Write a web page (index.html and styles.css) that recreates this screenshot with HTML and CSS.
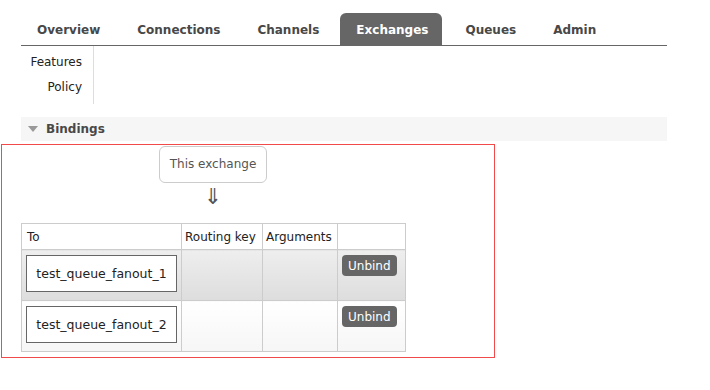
FILE: index.html
```html
<!DOCTYPE html>
<html lang="en">
<head>
    <meta charset="UTF-8">
    <title>Exchange: bindings</title>
    <link rel="stylesheet" href="styles.css">
</head>
<body>
    <div class="page">
        <ul class="tabs">
            <li><a href="#">Overview</a></li>
            <li><a href="#">Connections</a></li>
            <li><a href="#">Channels</a></li>
            <li class="selected"><a href="#">Exchanges</a></li>
            <li><a href="#">Queues</a></li>
            <li><a href="#">Admin</a></li>
        </ul>
        <div class="sub">
            <ul class="subnav">
                <li><a href="#">Features</a></li>
                <li><a href="#">Policy</a></li>
            </ul>
        </div>
        <h2 class="section-head"><span class="arrow"></span>Bindings</h2>
    </div>
    <div class="bindings">
        <div class="flow">
            <div class="this-exchange">This exchange</div>
            <div class="down">&#8659;</div>
        </div>
        <table class="list">
            <colgroup>
                <col class="c-to">
                <col class="c-key">
                <col class="c-args">
                <col class="c-btn">
            </colgroup>
            <thead>
                <tr>
                    <th class="col-to">To</th>
                    <th>Routing key</th>
                    <th>Arguments</th>
                    <th></th>
                </tr>
            </thead>
            <tbody>
                <tr class="alt1">
                    <td><span class="queue">test_queue_fanout_1</span></td>
                    <td></td>
                    <td></td>
                    <td><button class="btn">Unbind</button></td>
                </tr>
                <tr class="alt2">
                    <td><span class="queue">test_queue_fanout_2</span></td>
                    <td></td>
                    <td></td>
                    <td><button class="btn">Unbind</button></td>
                </tr>
            </tbody>
        </table>
    </div>
</body>
</html>
```

FILE: styles.css
```css
body {
    margin: 0;
    font-family: "DejaVu Sans", Verdana, sans-serif;
    font-size: 12px;
    color: #484848;
    background: #fff;
}
a {
    color: inherit;
    text-decoration: none;
}
.page {
    width: 646px;
    margin-left: 21px;
    padding-top: 13px;
}
.tabs {
    display: flex;
    list-style: none;
    margin: 0;
    padding: 0;
    border-bottom: 1px solid #666;
    height: 32px;
}
.tabs li {
    margin-right: 7px;
}
.tabs a {
    display: block;
    height: 32px;
    line-height: 34px;
    padding: 0 14px 0 16px;
    font-weight: bold;
    font-size: 12px;
    color: #484848;
    border-radius: 6px 6px 0 0;
}
.tabs .selected a {
    background: #666;
    color: #fff;
}
.sub {
    display: flex;
    height: 58px;
}
.subnav {
    list-style: none;
    margin: 0;
    padding: 4px 11px 0 0;
    width: 61px;
    border-right: 1px solid #ddd;
    text-align: right;
}
.subnav li {
    height: 25px;
    line-height: 25px;
    color: #222;
}
.section-head {
    margin: 13px 0 0;
    height: 24px;
    line-height: 24px;
    background: #f6f6f6;
    font-size: 12px;
    font-weight: bold;
    color: #484848;
    padding-left: 7px;
    display: flex;
    align-items: center;
}
.arrow {
    width: 0;
    height: 0;
    border-left: 5px solid transparent;
    border-right: 5px solid transparent;
    border-top: 6px solid #999;
    margin-right: 8px;
}
.bindings {
    margin: 3px 0 0 1px;
    width: 473px;
    border: 1px solid #f24a4a;
    padding: 1px 0 5px 19px;
}
.flow {
    width: 384px;
    display: flex;
    flex-direction: column;
    align-items: center;
}
.this-exchange {
    border: 1px solid #ccc;
    border-radius: 6px;
    padding: 0 10px;
    height: 35px;
    line-height: 35px;
    color: #555;
}
.down {
    font-size: 22px;
    line-height: 28px;
    height: 40px;
    color: #555;
}
.list {
    border-collapse: collapse;
    table-layout: fixed;
    width: 384px;
}
.c-to { width: 160px; }
.c-key { width: 81px; }
.c-args { width: 75px; }
.c-btn { width: 68px; }
.list th {
    border: 1px solid #ccc;
    font-weight: normal;
    text-align: left;
    white-space: nowrap;
    overflow: hidden;
    height: 25px;
    padding: 0 3px;
    color: #222;
    background: #fff;
}
.list th.col-to {
    padding-left: 5px;
}
.list td {
    border: 1px solid #ccc;
    height: 50px;
    padding: 0 4px;
    vertical-align: top;
}
.list tr.alt1 td {
    background: linear-gradient(#eee, #ddd);
}
.list tr.alt2 td {
    background: linear-gradient(#fff, #f6f6f6);
}
.queue {
    display: block;
    margin-top: 5px;
    border: 1px solid #666;
    background: #fff;
    height: 35px;
    line-height: 35px;
    text-align: center;
    color: #222;
    font-size: 12.5px;
}
.btn {
    margin-top: 5px;
    border: none;
    background: #666;
    color: #fff;
    font-family: "DejaVu Sans", Verdana, sans-serif;
    font-size: 12px;
    height: 21px;
    padding: 0 6px;
    border-radius: 4px;
}
```
